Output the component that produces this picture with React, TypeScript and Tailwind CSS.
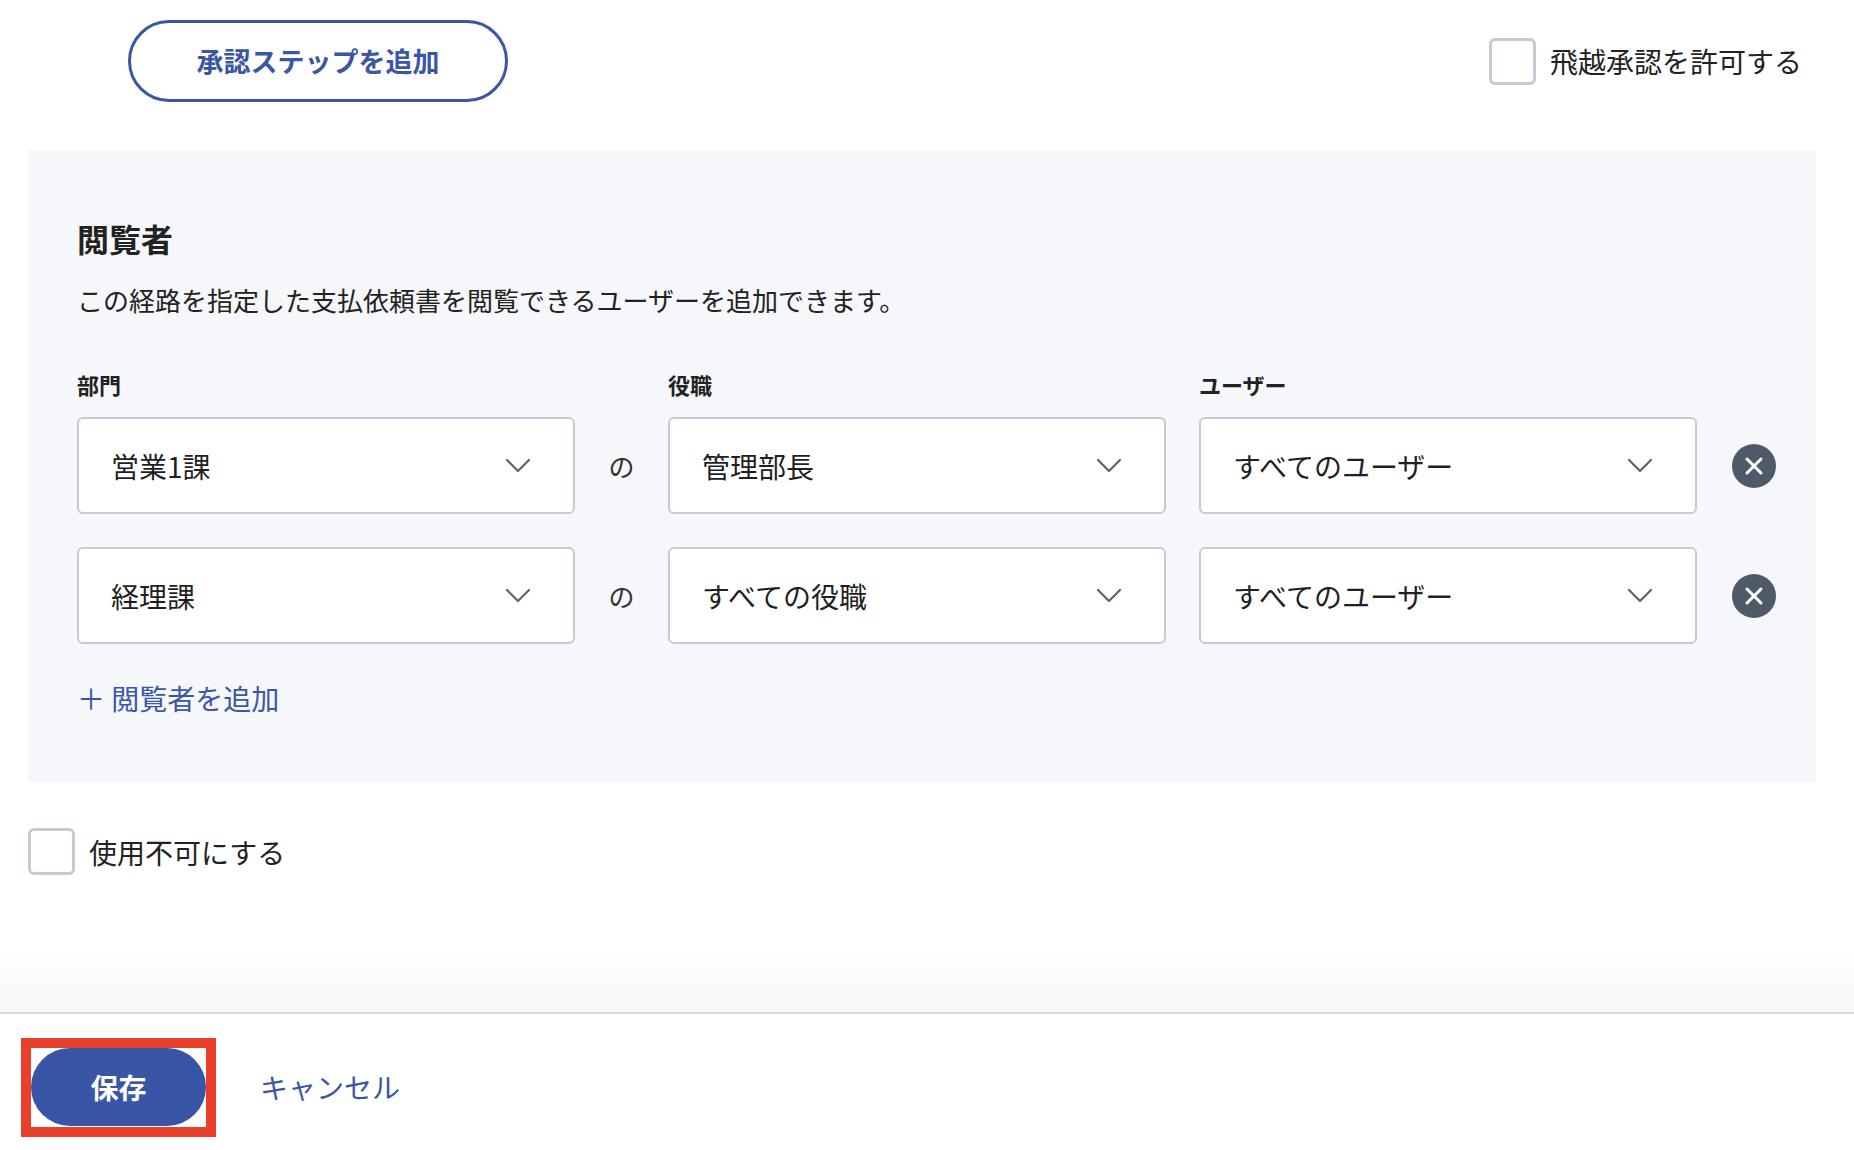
import React from "react";

const font = { fontFamily: '"Noto Sans CJK JP", "Noto Sans", sans-serif' };

function Chevron() {
  return (
    <svg width="26" height="16" viewBox="0 0 26 16" fill="none" stroke="#5b6472" strokeWidth="2.2" strokeLinecap="round" strokeLinejoin="round">
      <path d="M2 2 L13 13 L24 2" />
    </svg>
  );
}

function Select({ text }: { text: string }) {
  return (
    <div className="w-[498px] h-[97px] bg-white border-2 border-[#c5cbd5] rounded-[6px] flex items-center justify-between pl-[32px] pr-[42px]">
      <span className="text-[28px] text-[#1f1f1f]">{text}</span>
      <Chevron />
    </div>
  );
}

function XCircle() {
  return (
    <svg width="44" height="44" viewBox="0 0 44 44">
      <circle cx="22" cy="22" r="22" fill="#4f5a69" />
      <path d="M15 15 L29 29 M29 15 L15 29" stroke="white" strokeWidth="3" strokeLinecap="round" />
    </svg>
  );
}

function Row({ a, b, c }: { a: string; b: string; c: string }) {
  return (
    <div className="flex items-center">
      <Select text={a} />
      <span className="w-[93px] text-center text-[26px] text-[#333]">の</span>
      <Select text={b} />
      <div className="w-[33px]" />
      <Select text={c} />
      <div className="ml-[35px]"><XCircle /></div>
    </div>
  );
}

export default function App() {
  return (
    <div className="w-[1854px] h-[1150px] bg-white relative overflow-hidden" style={font}>
      <div className="flex items-center justify-between pt-[20px] pl-[128px] pr-[52px] h-[82px] box-content">
        <button className="w-[380px] h-[82px] rounded-full border-[3px] border-[#3a56a5] text-[#3a56a5] text-[27px] font-bold">承認ステップを追加</button>
        <label className="flex items-center gap-[14px]">
          <span className="w-[47px] h-[47px] rounded-[6px] border-[3px] border-[#c5cbd5] bg-white" />
          <span className="text-[28px] text-[#222]">飛越承認を許可する</span>
        </label>
      </div>
      <div className="mt-[48px] mx-[28px] w-[1788px] h-[632px] bg-[#f5f7fb] pl-[49px] pt-[64px]">
        <div className="text-[32px] font-bold text-[#222] leading-[48px]">閲覧者</div>
        <div className="text-[26px] text-[#222] mt-[20px] leading-[36px]">この経路を指定した支払依頼書を閲覧できるユーザーを追加できます。</div>
        <div className="flex mt-[51px] text-[22px] font-bold text-[#222] leading-[30px]">
          <span className="w-[591px]">部門</span>
          <span className="w-[531px]">役職</span>
          <span>ユーザー</span>
        </div>
        <div className="mt-[18px] flex flex-col gap-[33px]">
          <Row a="営業1課" b="管理部長" c="すべてのユーザー" />
          <Row a="経理課" b="すべての役職" c="すべてのユーザー" />
        </div>
        <div className="mt-[36px] text-[28px] text-[#3a56a5] leading-[36px]">＋ 閲覧者を追加</div>
      </div>
      <label className="flex items-center gap-[14px] ml-[28px] mt-[46px]">
        <span className="w-[47px] h-[47px] rounded-[6px] border-[3px] border-[#c5cbd5] bg-white" />
        <span className="text-[28px] text-[#222]">使用不可にする</span>
      </label>
      <div className="absolute left-0 right-0 top-[950px] h-[63px] bg-gradient-to-b from-white to-[#f7f7f8]" />
      <div className="absolute left-0 right-0 top-[1012px] h-[2px] bg-[#d9dde3]" />
      <div className="absolute left-0 right-0 top-[1014px] bottom-0 bg-white flex items-center">
        <div className="ml-[21px] mt-[10px] w-[195px] h-[99px] border-[10px] border-[#e8402a] flex items-center">
          <div className="w-full h-[78px] rounded-full bg-[#3955a6] text-white text-[28px] font-bold flex items-center justify-center">保存</div>
        </div>
        <span className="ml-[44px] mt-[10px] text-[28px] text-[#3a56a5]">キャンセル</span>
      </div>
    </div>
  );
}
